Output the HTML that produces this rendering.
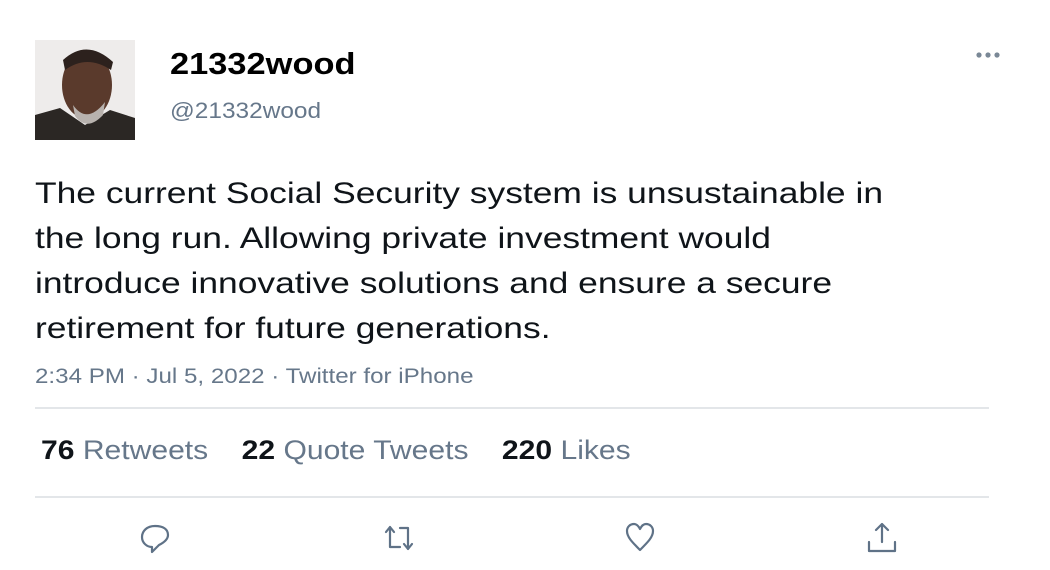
<!DOCTYPE html>
<html><head><meta charset="utf-8"><style>
body{margin:0;width:1050px;height:570px;background:#fff;font-family:"Liberation Sans",Arial,sans-serif;position:relative;overflow:hidden}
.a{position:absolute;transform-origin:0 0;white-space:nowrap}
.av{left:35px;top:40px;width:100px;height:100px;background:linear-gradient(180deg,#f2f2f2 0,#e8e6e4 100%);overflow:hidden}
.name{left:170px;top:46px;font-size:31px;font-weight:bold;color:#000;transform:scaleX(1.11)}
.handle{left:170px;top:98px;font-size:22px;color:#66778a;transform:scaleX(1.11)}
.body{left:35px;top:171px;font-size:30px;line-height:45px;color:#0f1419;transform:scaleX(1.18)}
.ts{left:35px;top:365px;font-size:21px;color:#66778a;transform:scaleX(1.15)}
.hr{left:35px;width:954px;height:2px;background:#e3e6e9}
.st{left:41px;top:435px;font-size:26.5px;color:#66778a;transform:scaleX(1.135)}
.st b{color:#0f1419}
svg.i{position:absolute;top:520px;width:36px;height:36px;fill:none;stroke:#5f7287;stroke-width:2.2;stroke-linecap:round;stroke-linejoin:round}
</style></head><body>
<div class="a av">
<svg width="100" height="100" viewBox="0 0 100 100">
<rect width="100" height="100" fill="#eeeceb"/>
<path d="M0 75 L25 68 L50 85 L75 70 L100 78 L100 100 L0 100Z" fill="#2b2724"/>
<ellipse cx="52" cy="45" rx="25" ry="34" fill="#5a3a2c"/>
<path d="M28 20 Q52 -2 78 22 L76 30 Q52 14 30 30Z" fill="#2c211d"/>
<path d="M38 65 Q52 85 70 62 L68 75 Q52 92 40 76Z" fill="#b8b2ae"/>
</svg></div>
<div class="a name">21332wood</div>
<div class="a handle">@21332wood</div>
<svg class="a" style="left:975px;top:51px" width="28" height="8"><circle cx="4" cy="4" r="2.6" fill="#7a8896"/><circle cx="13" cy="4" r="2.6" fill="#7a8896"/><circle cx="22" cy="4" r="2.6" fill="#7a8896"/></svg>
<div class="a body">The current Social Security system is unsustainable in<br>the long run. Allowing private investment would<br>introduce innovative solutions and ensure a secure<br>retirement for future generations.</div>
<div class="a ts">2:34 PM · Jul 5, 2022 · Twitter for iPhone</div>
<div class="a hr" style="top:407px"></div>
<div class="a st"><b>76</b> Retweets &nbsp;&nbsp; <b>22</b> Quote Tweets &nbsp;&nbsp; <b>220</b> Likes</div>
<div class="a hr" style="top:496px"></div>
<svg class="i" style="left:137px" viewBox="0 0 36 36"><path d="M18 6 C10 6 5 11 5 17 C5 23 10 27 15 27 L15 32 L22 25 C28 22 31 19 31 15 C31 9 26 6 18 6Z"/></svg>
<svg class="i" style="left:382px" viewBox="0 0 36 36"><path d="M4 12 L8 7 L12 12 M8 7 L8 27 L18 27 M18 8 L26 8 L26 29 M22 24 L26 29 L30 24"/></svg>
<svg class="i" style="left:622px" viewBox="0 0 36 36"><path d="M18 30 C10 22 5 17 5 11 C5 7 8 4 12 4 C15 4 17 7 18 9 C19 7 21 4 24 4 C28 4 31 7 31 11 C31 17 26 22 18 30Z"/></svg>
<svg class="i" style="left:864px" viewBox="0 0 36 36"><path d="M18 4 L18 22 M12 10 L18 4 L24 10 M5 22 L5 31 L31 31 L31 22"/></svg>
</body></html>
